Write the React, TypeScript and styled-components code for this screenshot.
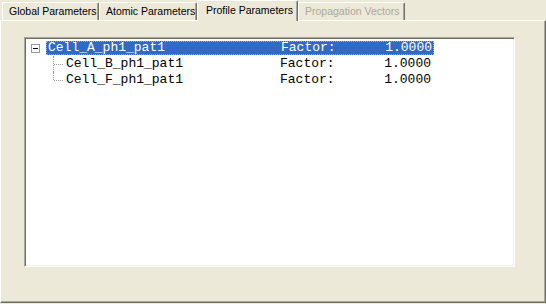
import React from "react";
import styled, { createGlobalStyle } from "styled-components";

const Global = createGlobalStyle`
  html, body { margin: 0; padding: 0; background: #ECE9D8; }
  body { width: 546px; height: 304px; overflow: hidden; }
`;

const Window = styled.div`
  width: 546px;
  height: 304px;
  background: #ECE9D8;
  display: flex;
  flex-direction: column;
  font-family: "Liberation Sans", Arial, sans-serif;
`;

const TabStrip = styled.div`
  display: flex;
  align-items: flex-start;
  padding-left: 2px;
  height: 20px;
  position: relative;
  z-index: 1;
`;

const Tab = styled.div<{ $w: number; $selected?: boolean; $disabled?: boolean }>`
  box-sizing: border-box;
  width: ${(p) => p.$w}px;
  height: ${(p) => (p.$selected ? 21 : 18)}px;
  margin-top: ${(p) => (p.$selected ? 0 : 2)}px;
  padding-left: ${(p) => (p.$selected ? 8 : 6)}px;
  padding-top: ${(p) => (p.$selected ? 3 : 2)}px;
  font-size: 10.5px;
  line-height: 13px;
  white-space: nowrap;
  color: ${(p) => (p.$disabled ? "#ACA899" : "#000")};
  background: #ECE9D8;
  border-top: 1px solid #fff;
  border-left: 1px solid #fff;
  border-right: 1px solid #716F64;
  box-shadow: inset -1px 0 0 #ACA899;
  border-radius: 2px 2px 0 0;
`;

const Panel = styled.div`
  box-sizing: border-box;
  flex: 1;
  margin-right: 0;
  border-top: 1px solid #fff;
  border-left: 1px solid #fff;
  border-right: 1px solid #716F64;
  border-bottom: 1px solid #716F64;
  box-shadow: inset -1px -1px 0 #ACA899;
  padding: 16px 0 0 23px;
  margin-bottom: 1px;
`;

const TreeBox = styled.div`
  box-sizing: border-box;
  width: 491px;
  height: 230px;
  background: #fff;
  border-top: 1px solid #ACA899;
  border-left: 1px solid #ACA899;
  border-right: 1px solid #fff;
  border-bottom: 1px solid #fff;
  box-shadow: inset 1px 1px 0 #716F64, inset -1px -1px 0 #F1EFE2;
  padding: 2px 0 0 1px;
`;

const Row = styled.div<{ $indent: number }>`
  display: flex;
  align-items: stretch;
  height: 16px;
  padding-left: ${(p) => p.$indent}px;
`;

const ExpanderCell = styled.div`
  width: 20px;
  display: flex;
  align-items: center;
`;

const Expander = styled.div`
  box-sizing: border-box;
  width: 9px;
  height: 9px;
  margin-left: 5px;
  border: 1px solid #919B9C;
  background: #fff;
  display: flex;
  align-items: center;
  justify-content: center;
  &::after {
    content: "";
    width: 5px;
    height: 1px;
    background: #000;
  }
`;

const Connector = styled.div<{ $last?: boolean }>`
  width: 11px;
  position: relative;
  &::before {
    content: "";
    position: absolute;
    left: 0;
    top: 0;
    height: ${(p) => (p.$last ? "8px" : "16px")};
    border-left: 1px dotted #9A9A9A;
  }
  &::after {
    content: "";
    position: absolute;
    left: 1px;
    top: 8px;
    width: 9px;
    border-top: 1px dotted #9A9A9A;
  }
`;

const Label = styled.div<{ $selected?: boolean }>`
  box-sizing: border-box;
  display: grid;
  grid-template-columns: 1fr 104px 47px;
  align-items: center;
  height: 14px;
  margin-top: 1px;
  padding: 0 2px;
  width: ${(p) => (p.$selected ? 388 : 369)}px;
  font-family: "Liberation Mono", "Courier New", monospace;
  font-size: 13px;
  line-height: 14px;
  white-space: nowrap;
  color: ${(p) => (p.$selected ? "#fff" : "#000")};
  background: ${(p) => (p.$selected ? "#316AC5" : "transparent")};
  outline: ${(p) => (p.$selected ? "1px dotted #8FA9D8" : "none")};
  outline-offset: -1px;
`;

const Value = styled.span`
  text-align: right;
`;

type Item = { name: string; factor: string };

const children: Item[] = [
  { name: "Cell_B_ph1_pat1", factor: "1.0000" },
  { name: "Cell_F_ph1_pat1", factor: "1.0000" },
];

export default function App() {
  return (
    <>
      <Global />
      <Window>
        <TabStrip>
          <Tab $w={97}>Global Parameters</Tab>
          <Tab $w={98}>Atomic Parameters</Tab>
          <Tab $w={101} $selected>
            Profile Parameters
          </Tab>
          <Tab $w={107} $disabled>
            Propagation Vectors
          </Tab>
        </TabStrip>
        <Panel>
          <TreeBox>
            <Row $indent={0}>
              <ExpanderCell>
                <Expander />
              </ExpanderCell>
              <Label $selected>
                <span>Cell_A_ph1_pat1</span>
                <span>Factor:</span>
                <Value>1.0000</Value>
              </Label>
            </Row>
            {children.map((c, i) => (
              <Row $indent={27} key={c.name}>
                <Connector $last={i === children.length - 1} />
                <Label>
                  <span>{c.name}</span>
                  <span>Factor:</span>
                  <Value>{c.factor}</Value>
                </Label>
              </Row>
            ))}
          </TreeBox>
        </Panel>
      </Window>
    </>
  );
}
